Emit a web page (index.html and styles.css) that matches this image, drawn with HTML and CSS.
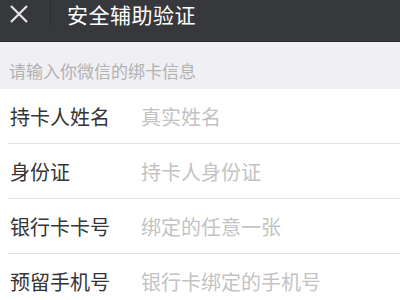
FILE: index.html
```html
<!DOCTYPE html>
<html lang="zh">
<head>
<meta charset="utf-8">
<link rel="stylesheet" href="styles.css">
</head>
<body>
<header class="bar">
  <div class="close">
    <svg width="20" height="20" viewBox="0 0 20 20"><path d="M2 2 L18 18 M18 2 L2 18" stroke="#e6e6e6" stroke-width="2.2" fill="none"/></svg>
  </div>
  <div class="divider"></div>
  <div class="title">安全辅助验证</div>
</header>
<div class="hint">请输入你微信的绑卡信息</div>
<div class="form">
  <div class="row"><span class="label">持卡人姓名</span><span class="ph">真实姓名</span></div>
  <div class="row"><span class="label">身份证</span><span class="ph">持卡人身份证</span></div>
  <div class="row"><span class="label">银行卡卡号</span><span class="ph">绑定的任意一张</span></div>
  <div class="row"><span class="label">预留手机号</span><span class="ph">银行卡绑定的手机号</span></div>
</div>
</body>
</html>
```
FILE: styles.css
```css
html, body {
  margin: 0;
  padding: 0;
  background: #ffffff;
  font-family: "Noto Sans CJK SC", "Noto Sans", sans-serif;
}
.bar {
  height: 41px;
  background: #37383c;
  border-bottom: 1px solid #2a2a2c;
  display: flex;
  align-items: flex-start;
}
.close {
  width: 20px;
  height: 20px;
  margin: 4px 0 0 9px;
}
.close svg { display: block; }
.divider {
  width: 1px;
  height: 26px;
  background: #2b2b2e;
  margin-left: 21px;
}
.title {
  margin-left: 16px;
  color: #ffffff;
  font-size: 21px;
  line-height: 28px;
  letter-spacing: 0.5px;
}
.hint {
  height: 47px;
  background: #efeff4;
  color: #b2b2b2;
  font-size: 17px;
  line-height: 37px;
  padding: 10px 0 0 9px;
  box-sizing: border-box;
}
.row {
  height: 55px;
  display: flex;
  align-items: center;
  margin-left: 8px;
  padding-left: 2px;
  border-top: 1px solid #e4e4e4;
  box-sizing: border-box;
}
.row:first-child {
  border-top: none;
  height: 54px;
}
.label {
  width: 131px;
  color: #353535;
  font-size: 20px;
}
.ph {
  color: #c3c3c3;
  font-size: 20px;
}
```
